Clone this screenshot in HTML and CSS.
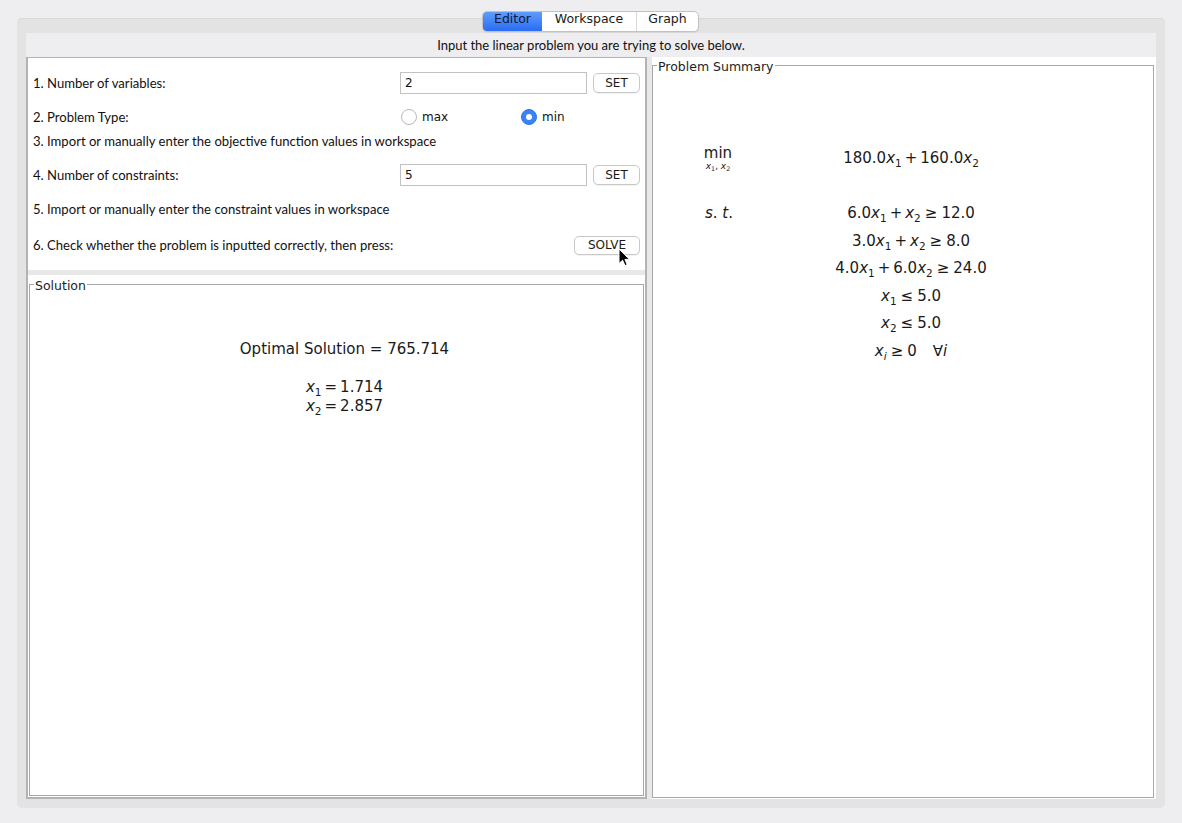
FILE: index.html
```html
<!DOCTYPE html>
<html>
<head>
<meta charset="utf-8">
<title>Linear Problem Editor</title>
<link rel="stylesheet" href="styles.css">
</head>
<body>
<div class="window">
  <div class="tabpane">
    <div class="tabs">
      <div class="tab tab-editor">Editor</div>
      <div class="tab tab-ws">Workspace</div>
      <div class="tab tab-graph">Graph</div>
    </div>
    <div class="content">
      <div class="header">Input the linear problem you are trying to solve below.</div>
      <div class="split">
        <div class="left">
          <div class="form">
            <div class="row">
              <div class="label">1. Number of variables:</div>
              <div class="field">2</div>
              <div class="btn btn-set">SET</div>
            </div>
            <div class="row">
              <div class="label">2. Problem Type:</div>
              <div class="radios">
                <div class="radio"><span class="dot"></span><span>max</span></div>
                <div class="radio"><span class="dot on"></span><span>min</span></div>
              </div>
            </div>
            <div class="row row-tight">
              <div class="label label-wide">3. Import or manually enter the objective function values in workspace</div>
            </div>
            <div class="row">
              <div class="label">4. Number of constraints:</div>
              <div class="field">5</div>
              <div class="btn btn-set">SET</div>
            </div>
            <div class="row">
              <div class="label label-wide">5. Import or manually enter the constraint values in workspace</div>
            </div>
            <div class="row row-last">
              <div class="label">6. Check whether the problem is inputted correctly, then press:</div>
              <div class="btn btn-solve">SOLVE</div>
            </div>
            <svg class="cursor" width="13" height="19" viewBox="0 0 13 19">
              <path d="M1 1 L1 15.5 L4.6 12.2 L7 17.6 L9.2 16.6 L6.9 11.4 L11.6 11.4 Z" fill="#000" stroke="#fff" stroke-width="1" stroke-linejoin="round"/>
            </svg>
          </div>
          <div class="divider"></div>
          <div class="solution-wrap">
            <fieldset class="titled solution">
              <legend>Solution</legend>
              <div class="sol-body">
                <div class="sol-main">Optimal Solution = 765.714</div>
                <div class="sol-var"><i>x</i><sub>1</sub><span class="rel">=</span>1.714</div>
                <div class="sol-var"><i>x</i><sub>2</sub><span class="rel">=</span>2.857</div>
              </div>
            </fieldset>
          </div>
        </div>
        <div class="gap"></div>
        <div class="right">
          <fieldset class="titled summary">
            <legend>Problem Summary</legend>
            <div class="sum-body">
              <div class="obj">
                <div class="opname">
                  <div class="min">min</div>
                  <div class="under"><i>x</i><sub>1</sub>, <i>x</i><sub>2</sub></div>
                </div>
                <div class="expr">180.0<i>x</i><sub>1</sub><span class="op">+</span>160.0<i>x</i><sub>2</sub></div>
              </div>
              <div class="st">
                <div class="st-label"><i>s</i>. <i>t</i>.</div>
                <div class="cons">
                  <div>6.0<i>x</i><sub>1</sub><span class="op">+</span><i>x</i><sub>2</sub><span class="rel">≥</span>12.0</div>
                  <div>3.0<i>x</i><sub>1</sub><span class="op">+</span><i>x</i><sub>2</sub><span class="rel">≥</span>8.0</div>
                  <div>4.0<i>x</i><sub>1</sub><span class="op">+</span>6.0<i>x</i><sub>2</sub><span class="rel">≥</span>24.0</div>
                  <div><i>x</i><sub>1</sub><span class="rel">≤</span>5.0</div>
                  <div><i>x</i><sub>2</sub><span class="rel">≤</span>5.0</div>
                  <div><i>x</i><sub><i>i</i></sub><span class="rel">≥</span>0<span class="quad"></span>∀<i>i</i></div>
                </div>
              </div>
            </div>
          </fieldset>
        </div>
      </div>
    </div>
  </div>
</div>
</body>
</html>
```

FILE: styles.css
```css
* { box-sizing: border-box; }
html, body { margin: 0; padding: 0; }
body {
  width: 1182px;
  height: 823px;
  overflow: hidden;
  background: #eeedf0;
  font-family: "DejaVu Sans", sans-serif;
  color: #1d1d1d;
}
.window { padding: 18px 17px 0; }
.tabpane {
  position: relative;
  height: 790px;
  background: #e3e3e3;
  border-radius: 5px;
  padding: 15px 9px 9px;
  box-shadow: inset 0 1px 0 #d8d8d8;
}
.tabs {
  position: absolute;
  top: -7px;
  left: 465px;
  height: 21px;
  display: flex;
  border: 1px solid #c2c2c2;
  border-radius: 5px;
  background: #fff;
  overflow: hidden;
  font-size: 12.5px;
  box-shadow: 0 1px 1px rgba(0,0,0,0.06);
}
.tab {
  display: flex;
  align-items: center;
  justify-content: center;
  padding-bottom: 6px;
  color: #1a1a1a;
}
.tab-editor {
  width: 59px;
  background: linear-gradient(#5e9dfb, #2a6cf2);
  color: #0d1a3a;
}
.tab-ws { width: 95px; border-right: 1px solid #d8d8d8; }
.tab-graph { width: 61px; }

.content {
  height: 766px;
  background: #eeedf0;
  display: flex;
  flex-direction: column;
}
.header {
  height: 24px;
  line-height: 24px;
  text-align: center;
  font-family: "Lato", sans-serif;
  font-size: 13px;
  color: #111;
}
.split { flex: 1; display: flex; }
.left {
  width: 621px;
  border-style: solid;
  border-color: #b3b3b3;
  border-width: 1px 2px 2px 2px;
  display: flex;
  flex-direction: column;
}
.form {
  position: relative;
  background: #fff;
  height: 212px;
  padding: 13px 4px 0 5px;
  display: flex;
  flex-direction: column;
  gap: 10px;
  font-family: "Lato", sans-serif;
  font-size: 13.1px;
  color: #111;
}
.row { height: 24px; display: flex; align-items: center; }
.row-tight { margin-top: -10px; }
.row-last { margin-top: 2px; }
.label { width: 367px; white-space: nowrap; }
.label-wide { width: auto; }
.field {
  width: 187px;
  height: 22px;
  border: 1px solid #c2c2c2;
  padding-left: 4px;
  display: flex;
  align-items: center;
  font-family: "DejaVu Sans", sans-serif;
  font-size: 12px;
}
.btn {
  height: 20px;
  border: 1px solid #c8c8c8;
  border-radius: 5px;
  background: #fff;
  display: flex;
  align-items: center;
  justify-content: center;
  font-family: "DejaVu Sans", sans-serif;
  font-size: 12px;
  color: #1a1a1a;
  box-shadow: 0 1px 0 rgba(0,0,0,0.05);
}
.btn-set { width: 47px; margin-left: 6px; }
.btn-solve { width: 66px; height: 19px; margin-left: auto; margin-right: 1px; }
.radios { display: flex; }
.radio {
  width: 120px;
  display: flex;
  align-items: center;
  gap: 5px;
  padding-left: 1px;
  font-family: "DejaVu Sans", sans-serif;
  font-size: 12px;
}
.dot {
  width: 16px;
  height: 16px;
  border-radius: 50%;
  border: 1px solid #b8b8b8;
  background: #fff;
  display: flex;
  align-items: center;
  justify-content: center;
}
.dot.on { background: #3b82f7; border-color: #2f74e8; }
.dot.on::after {
  content: "";
  width: 6px;
  height: 6px;
  border-radius: 50%;
  background: #fff;
}
.cursor { position: absolute; left: 590px; top: 190px; }

.divider { height: 5px; background: #e8e8e8; }
.solution-wrap {
  flex: 1;
  background: #fff;
  padding: 1px;
  display: flex;
}
.titled {
  margin: 0;
  padding: 0;
  border: 1px solid #a8a8a8;
  flex: 1;
  min-width: 0;
}
.titled legend {
  margin-left: 4px;
  padding: 4px 1px 0;
  font-family: "DejaVu Sans", sans-serif;
  font-size: 12.5px;
  line-height: 12px;
  color: #1d1d1d;
}
.sol-body {
  padding-top: 47px;
  padding-left: 16px;
  display: flex;
  flex-direction: column;
  align-items: center;
  font-size: 15px;
  color: #1a1a1a;
}
.sol-main { line-height: 20px; margin-bottom: 19px; }
.sol-var { line-height: 19px; }

i { font-style: oblique; }
sub { font-size: 70%; vertical-align: -3.5px; line-height: 0; }
.op { margin: 0 3px; }
.rel { margin: 0 4px; }
.sol-var .rel { margin: 0 3px; }
.quad { display: inline-block; width: 16px; }

.gap { width: 5px; background: #e8e8e8; }
.right {
  flex: 1;
  background: #fff;
  padding: 0 2px 1px 0;
  display: flex;
}
.sum-body {
  padding-top: 72px;
  font-size: 15px;
  color: #1a1a1a;
}
.obj, .st {
  display: grid;
  grid-template-columns: 130px 256px;
  align-items: center;
}
.opname { text-align: center; }
.min { line-height: 16px; }
.under { font-size: 9px; line-height: 10px; }
.under sub { vertical-align: -2px; }
.expr { text-align: center; }
.st { margin-top: 29px; align-items: start; }
.st-label { text-align: center; line-height: 27.6px; padding-left: 2px; }
.cons { text-align: center; }
.cons div { line-height: 27.6px; }
```
